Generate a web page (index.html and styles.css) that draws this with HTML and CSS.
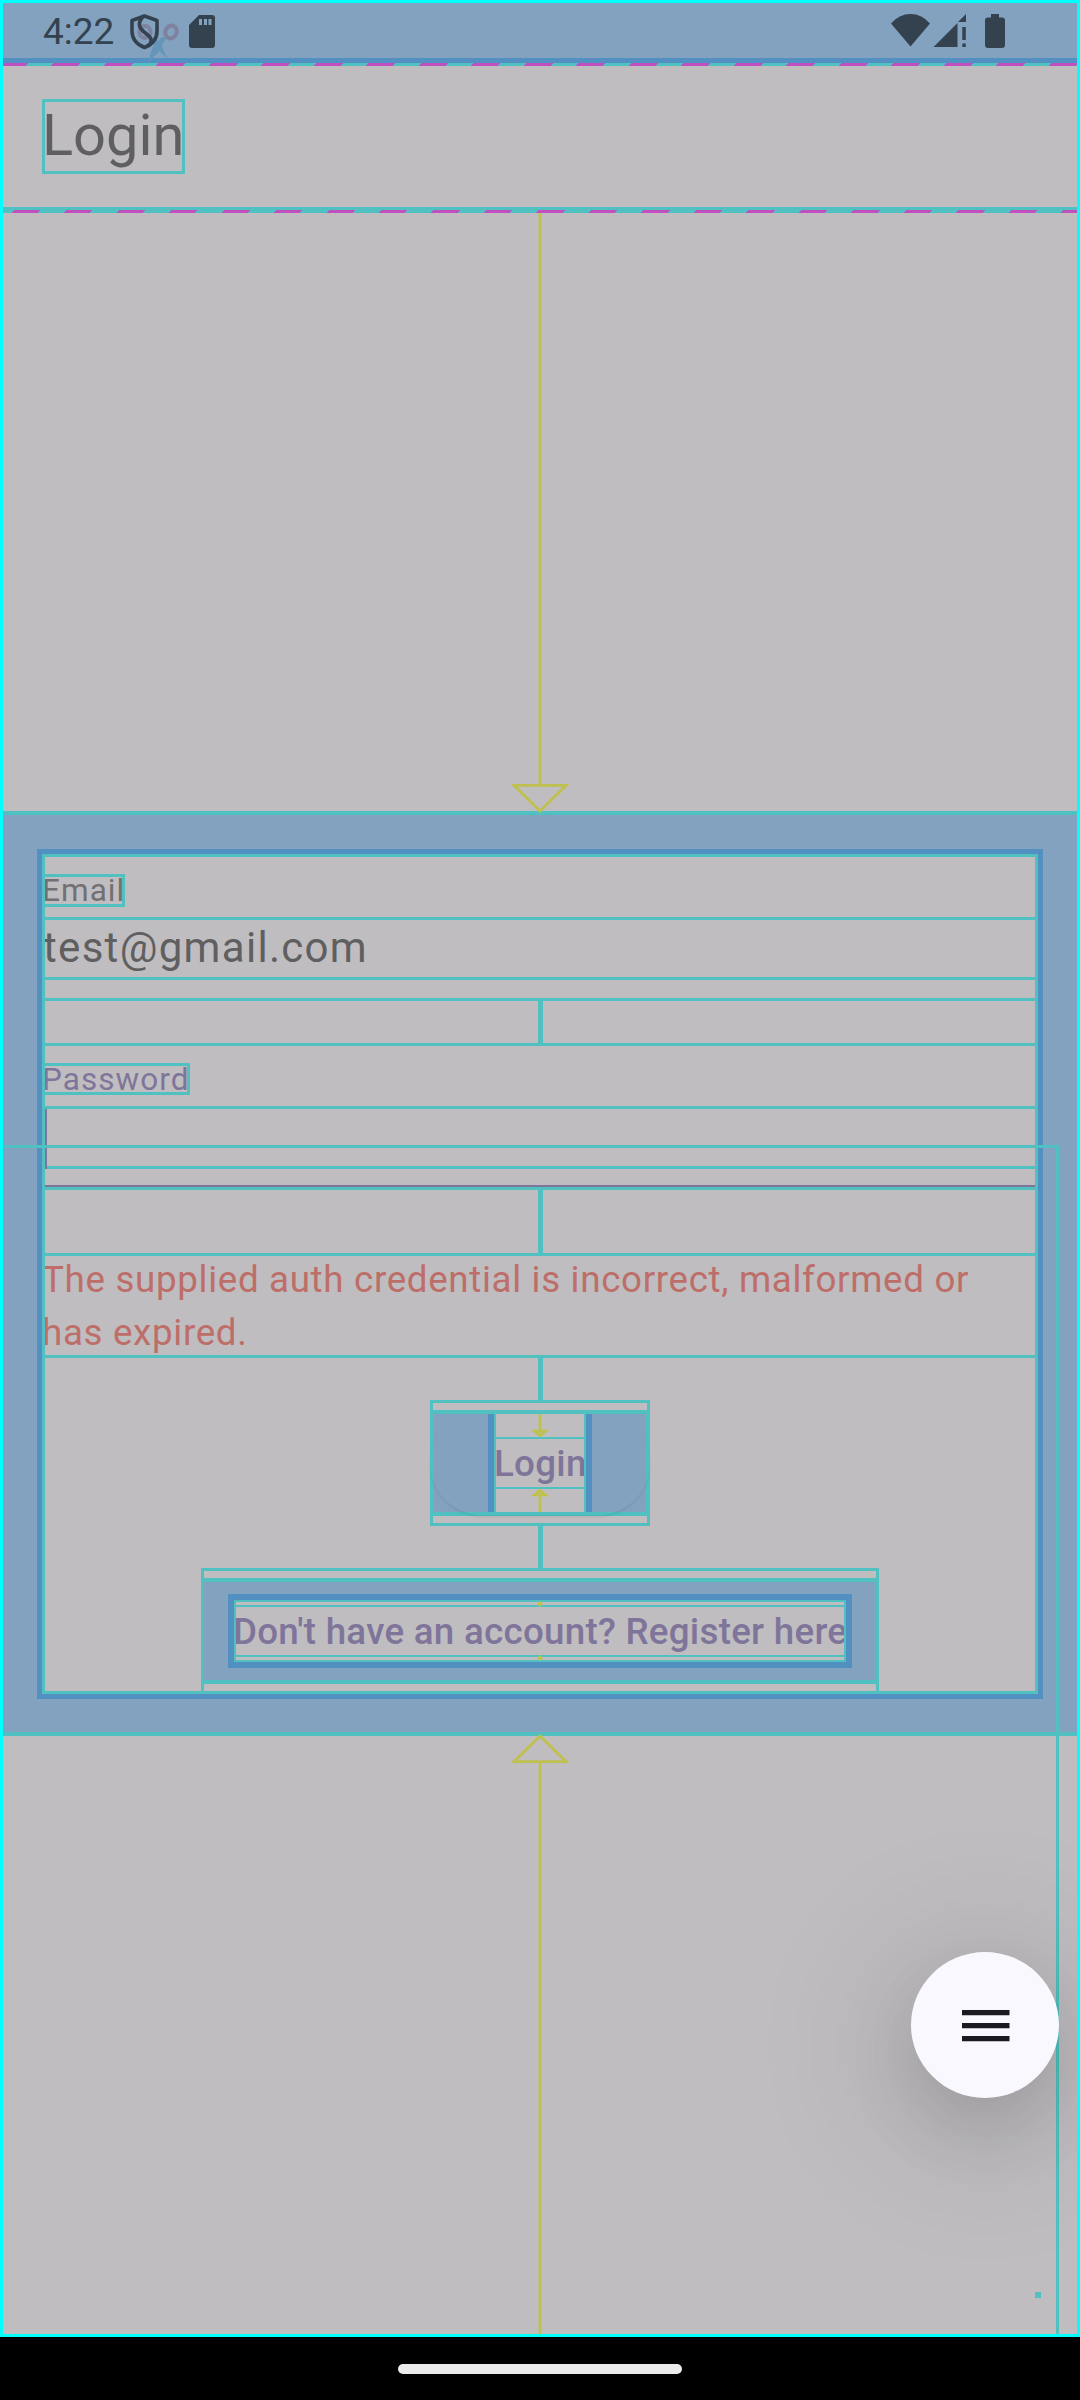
FILE: index.html
```html
<!DOCTYPE html>
<html lang="en">
<head>
<meta charset="utf-8">
<title>Login</title>
<link rel="stylesheet" href="styles.css">
</head>
<body>
<div class="screen">
  <div class="app">
    <header class="status">
      <span class="clock">4:22</span>
      <svg class="status-left" width="90" height="60" viewBox="127 3 90 60">
        <g fill="none" stroke="#7e829f" stroke-width="4"><ellipse cx="145" cy="32" rx="5.6" ry="6"/><ellipse cx="171" cy="32" rx="5.6" ry="6.500" transform="rotate(25 171 32)"/></g>
        <path d="M152 38l8 4 7 16-7-6-8-9zM166 38l-8 15-10 9 5-16 9-9z" fill="#6596b9"/>
        <path d="M144.5 16L157 20.5v10.500c0 8-5 13.500-12.500 16.500C137 44.500 132 39 132 31V20.500z" fill="none" stroke="#34424f" stroke-width="3.600" stroke-linejoin="round"/>
        <path d="M144 16c-6 5-6 11-1 15l6 5c3 3 3 7-1 10" fill="none" stroke="#34424f" stroke-width="3.600"/>
        <path fill-rule="evenodd" fill="#34424f" d="M199 15h13q3 0 3 3v27q0 3-3 3h-20q-3 0-3-3V25zM199 19v6h3v-6zM204 19v6h3v-6zM208.500 19v6h3v-6z"/>
      </svg>
      <svg class="status-right" width="116" height="55" viewBox="890 3 116 55" fill="#34424f">
        <path d="M891 23.500Q899 14 910.500 14T930 23.500L910.500 46.500z"/>
        <path d="M933.500 47L957.500 23v24zM958 22l8-8v8zM962.300 27h3.500v13h-3.500zM962.300 43.500h3.500v3.500h-3.500z"/>
        <path d="M991 14h8v3.500h3q3 0 3 3v24.500q0 3-3 3h-14q-3 0-3-3V20.500q0-3 3-3h3z"/>
      </svg>
    </header>
    <div class="dashes dashes-top"></div>
    <div class="appbar"><h1 class="title">Login</h1></div>
    <div class="dashes dashes-bottom"></div>
    <div class="space space-top">
      <svg width="60" height="602" viewBox="0 0 60 602" fill="none" stroke="#c0c04f" stroke-width="2.800"><path d="M30 0V572M4 572.300H56L30 598z"/></svg>
    </div>
    <main class="padding">
      <div class="inset">
        <form class="form">
          <div class="field">
            <div class="label-row"><label class="label">Email</label></div>
            <div class="value"><span class="value-text">test@gmail.com</span></div>
            <div class="underline"></div>
          </div>
          <div class="gap"></div>
          <div class="field active">
            <div class="label-row"><label class="label">Password</label></div>
            <div class="value"><span class="caret"></span></div>
            <div class="underline"></div>
          </div>
          <div class="gap tall"></div>
          <div class="error"><p class="error-text">The supplied auth credential is incorrect, malformed or<br>has expired.</p></div>
          <div class="gap"></div>
          <div class="login">
            <div class="login-fill">
              <div class="login-inner">
                <svg width="16" height="25" viewBox="0 0 16 25" class="arrow"><path d="M8 0V18M2 18.500H14L8 23.500z"/></svg>
                <div class="login-text">Login</div>
                <svg width="16" height="25" viewBox="0 0 16 25" class="arrow"><path d="M8 25V7M2 6.500H14L8 1.500z"/></svg>
              </div>
            </div>
          </div>
          <div class="gap"></div>
          <div class="register">
            <div class="register-fill">
              <div class="register-inset">
                <div class="register-box"><div class="register-text">Don't have an account? Register here</div></div>
              </div>
            </div>
          </div>
        </form>
      </div>
    </main>
    <div class="space space-bottom">
      <svg width="60" height="602" viewBox="0 0 60 602" fill="none" stroke="#c0c04f" stroke-width="2.800"><path d="M30 602V30M4 29.700H56L30 4z"/></svg>
    </div>
    <div class="fab-bounds"></div>
    <div class="fab">
      <svg width="48" height="34" viewBox="0 0 48 34" fill="#1b1a20"><path d="M0 1h47.500v5.300H0zM0 14h47.500v5.300H0zM0 27h47.500v5.300H0z"/></svg>
    </div>
    <div class="dot"></div>
  </div>
  <footer class="nav"><div class="pill"></div></footer>
</div>
</body>
</html>
```
FILE: styles.css
```css
* { box-sizing: border-box; margin: 0; padding: 0; }
:root {
  --gray: #bfbdc0;
  --teal: #50c0c0;
  --blue: #82a2bf;
  --deep: #5190c1;
  --magenta: #c050c0;
  --yellow: #c0c04f;
  --purple: #7f759a;
}
body { width: 1080px; height: 2400px; background: #000; font-family: Roboto, sans-serif; overflow: hidden; }
svg { display: block; flex: none; }
.screen { display: flex; flex-direction: column; height: 2400px; }
.app { position: relative; height: 2337px; border: 3px solid #0ff; background: var(--gray); display: flex; flex-direction: column; overflow: hidden; }

.status { height: 60px; background: var(--blue); border-bottom: 5px solid var(--deep); display: flex; padding: 0 71px 0 40px; }
.clock { width: 84px; font-size: 37px; line-height: 57px; color: #34424f; }
.status-right { margin-left: auto; }

.dashes { height: 3px; }
.dashes-top { background: repeating-linear-gradient(135deg, var(--magenta) 0 18px, var(--teal) 18px 36.06px, var(--magenta) 36.06px 37.12px); }
.dashes-bottom { background: repeating-linear-gradient(135deg, var(--teal) 0 7.8px, var(--magenta) 7.8px 26.5px, var(--teal) 26.5px 37.12px); }
.appbar { height: 144px; border-bottom: 3px solid var(--teal); padding: 33px 39px; }
.title { position: relative; width: 143px; height: 75px; font-weight: 400; font-size: 57.75px; line-height: 73px; color: #5f5f61; white-space: nowrap; }
.title::after { content: ""; position: absolute; inset: 0; border: 3px solid var(--teal); }

.space { display: flex; justify-content: center; position: relative; z-index: 1; height: 598px; }
.space-bottom svg { margin-top: -4px; }

.padding { height: 925px; border: solid var(--teal); border-width: 4px 0; background: var(--blue); padding: 34px; }
.inset { height: 850px; border: 5px solid var(--deep); background: var(--gray); }
.form { position: relative; height: 840px; padding: 3px; display: flex; flex-direction: column; align-items: center; }
.form::after { content: ""; position: absolute; inset: 0; border: 3px solid var(--teal); }

.field { width: 100%; border-bottom: 3px solid var(--teal); }
.field.active { border-top: 3px solid var(--teal); }
.label-row { height: 60px; padding-top: 17px; display: flex; }
.label { position: relative; height: 33px; margin-left: -3px; font-size: 31.5px; line-height: 33px; letter-spacing: 1.05px; color: #727073; white-space: nowrap; }
.active .label { color: var(--purple); height: 32px; }
.label::after { content: ""; position: absolute; inset: 0; border: 3px solid var(--teal); }
.value { height: 63px; border: solid var(--teal); border-width: 3px 0; font-size: 42px; line-height: 55px; letter-spacing: 1.31px; color: #5f5f61; display: flex; }
.value-text { margin-left: -2px; }
.caret { width: 2px; height: 60px; background: var(--purple); }
.underline { height: 18px; }
.active .underline { border-bottom: 2px solid var(--purple); }

.gap { height: 42px; width: 5px; background: var(--teal); flex: none; }
.gap.tall { height: 63px; }
.error { width: 100%; height: 105px; border: solid var(--teal); border-width: 3px 0; }
.error-text { margin: -2px 0 0 -3px; font-size: 36.75px; line-height: 52.5px; letter-spacing: 0.66px; color: #be6e69; white-space: nowrap; }

.login { width: 220px; height: 126px; border: 3px solid var(--teal); padding: 7px 0; }
.login-fill { position: relative; width: 220px; height: 106px; margin-left: -3px; border: 4px solid var(--teal); background: var(--blue); display: flex; justify-content: center; }
.login-fill::after { content: ""; position: absolute; inset: -4px -4px -3px; border-radius: 52px; box-shadow: 0 2px 3px rgba(0, 0, 0, .07); }
.login-inner { position: relative; width: 104px; height: 98px; background: var(--gray); display: flex; flex-direction: column; align-items: center; }
.login-inner::after { content: ""; position: absolute; inset: 0; border: solid var(--deep); border-width: 0 6px; box-shadow: inset 2px 0 var(--teal), inset -2px 0 var(--teal); }
.arrow { position: relative; z-index: 1; height: 23px; overflow: visible; fill: none; stroke: var(--yellow); stroke-width: 3; }
.login-text { width: 92px; height: 52px; border: solid var(--teal); border-width: 2px 0; font-weight: 500; font-size: 36.75px; line-height: 49px; letter-spacing: .26px; color: var(--purple); white-space: nowrap; }

.register { width: 678px; height: 123px; border: 3px solid var(--teal); border-bottom: 0; padding-top: 7px; }
.register-fill { height: 106px; border: solid var(--teal); border-width: 4px 0; background: var(--blue); padding: 12px 24px; }
.register-inset { position: relative; height: 74px; padding: 8px 5px; background: var(--gray); }
.register-inset::after { content: ""; position: absolute; inset: 0; border: 6px solid var(--deep); box-shadow: inset 0 0 0 2px var(--teal); }
.register-box { position: relative; height: 58px; padding: 3px 0; }
.register-box::before, .register-box::after { content: ""; position: absolute; z-index: 1; left: 50%; width: 6px; height: 6px; margin-left: -3px; background: var(--yellow); clip-path: polygon(50% 0, 100% 50%, 50% 100%, 0 50%); }
.register-box::before { top: -1px; }
.register-box::after { bottom: -1px; }
.register-text { height: 52px; border: solid var(--teal); border-width: 2px 0; font-weight: 500; font-size: 36.75px; line-height: 49px; letter-spacing: .26px; color: var(--purple); white-space: nowrap; }

.fab-bounds { position: absolute; left: 0; top: 1142px; width: 1056px; height: 1200px; border: solid var(--teal); border-width: 3px 3px 0 0; }
.fab { position: absolute; left: 908px; top: 1949px; width: 148px; height: 146px; border-radius: 50%; background: #f9f8ff; box-shadow: 0 32px 76px -4px rgba(0, 0, 0, .12), 0 20px 150px 30px rgba(0, 0, 0, .11); display: flex; align-items: center; justify-content: center; padding: 2px 0 0 1px; z-index: 2; }
.dot { position: absolute; left: 1032px; top: 2289px; width: 6px; height: 6px; background: var(--teal); }

.nav { height: 63px; display: flex; justify-content: center; padding-top: 27px; }
.pill { width: 284px; height: 10px; border-radius: 5px; background: #ebebeb; }
```
